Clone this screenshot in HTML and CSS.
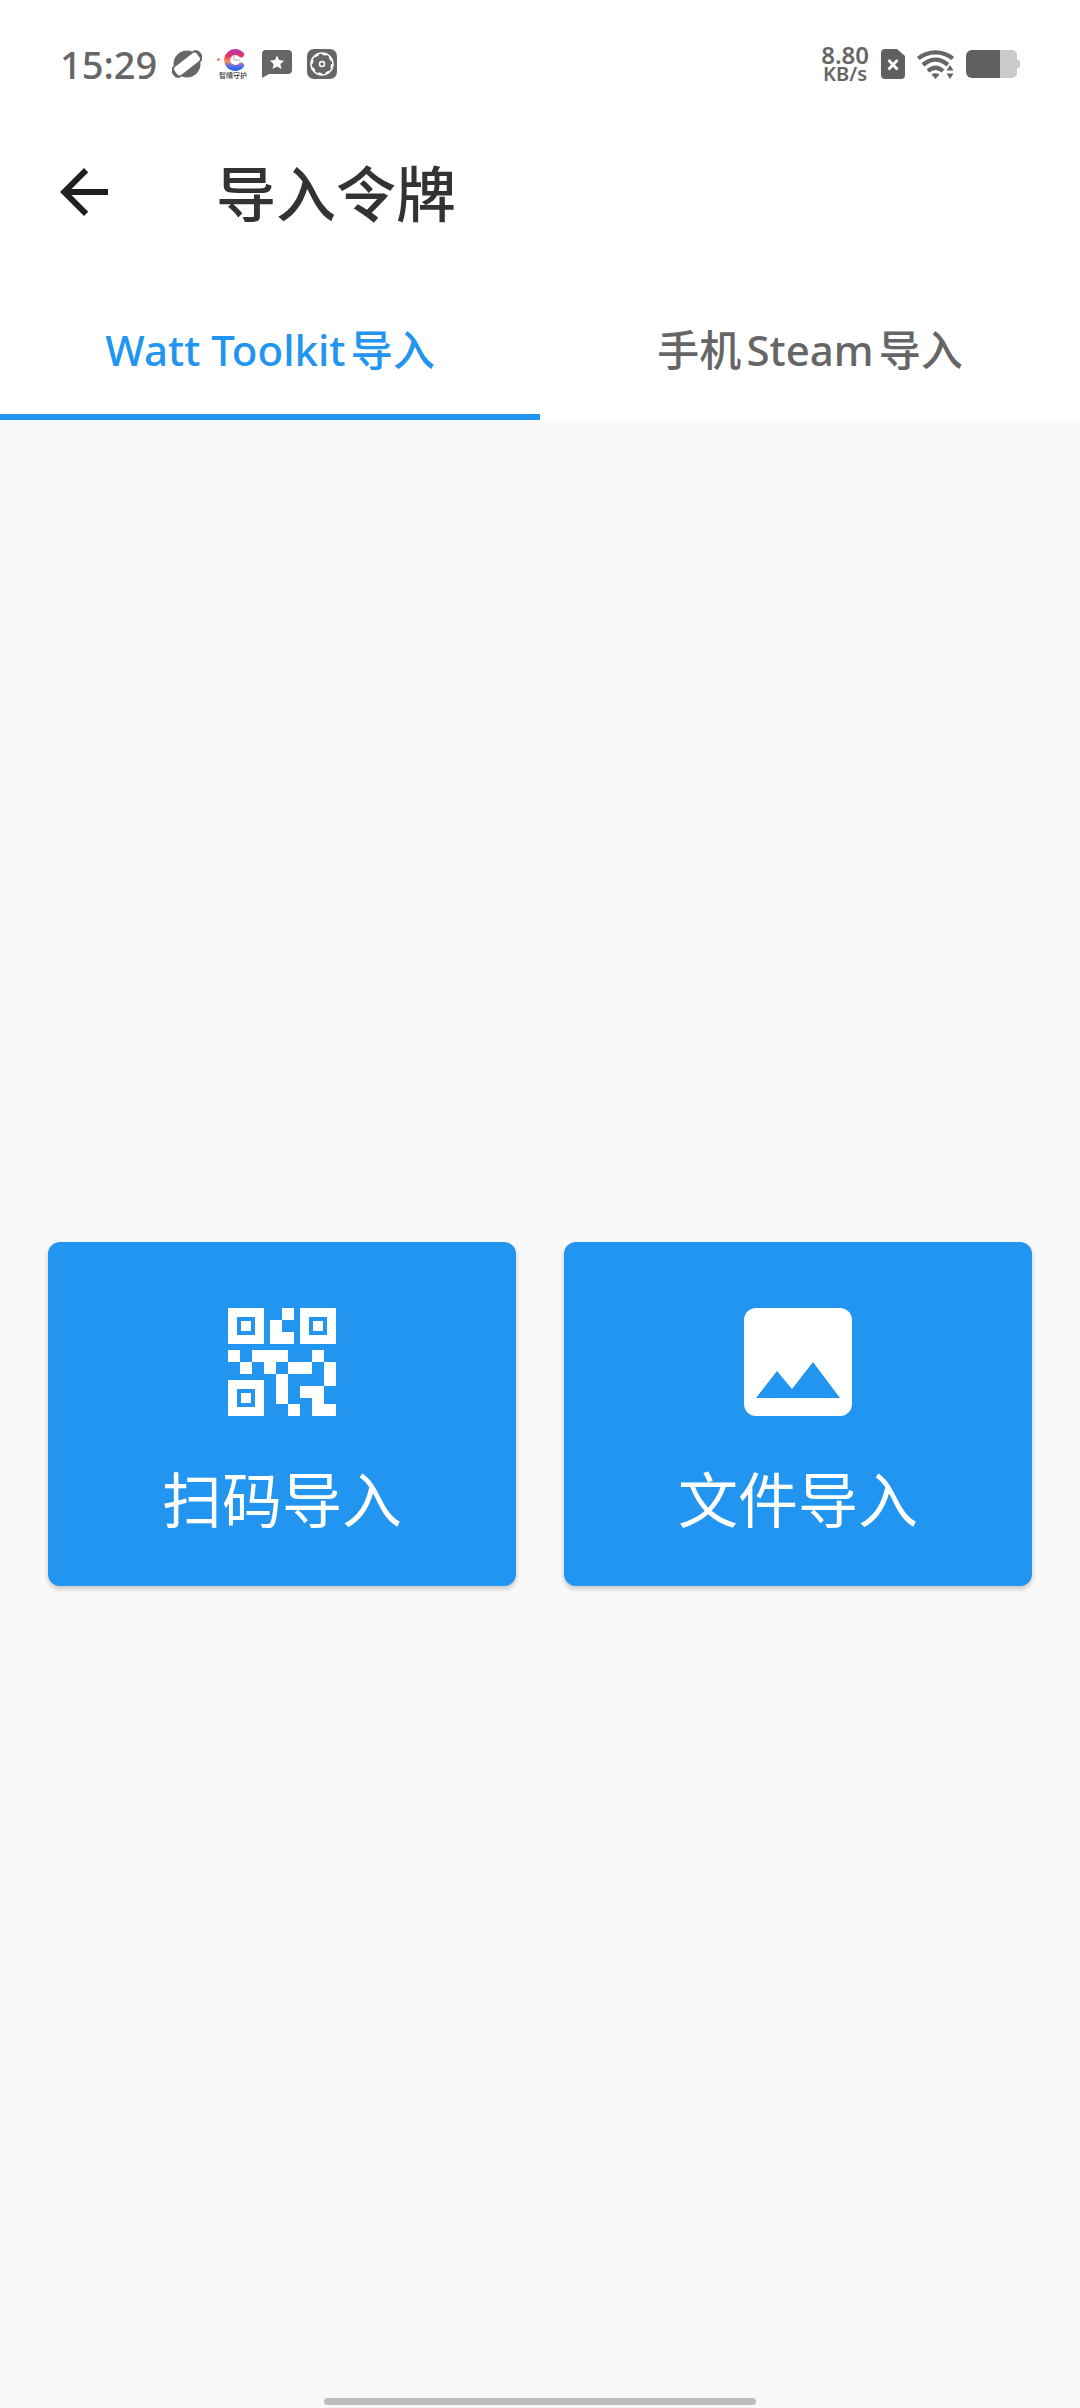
FILE: index.html
```html
<!DOCTYPE html>
<html lang="zh-CN">
<head>
<meta charset="utf-8">
<meta name="viewport" content="width=device-width, initial-scale=1">
<title>导入令牌</title>
<link rel="stylesheet" href="styles.css">
</head>
<body>
<div class="screen">
  <div class="status-bar">
    <div class="status-group">
      <span class="clock">15:29</span>
      <svg class="status-icon" viewBox="0 0 30 30" aria-hidden="true">
        <circle cx="15" cy="15" r="13.500" fill="#666"/>
        <g transform="rotate(-38 15 15)">
          <rect x="-2.500" y="8.500" width="35" height="13" rx="5" fill="#666"/>
          <rect x="1" y="10" width="28" height="10" rx="3" fill="#fff"/>
        </g>
      </svg>
      <svg class="status-icon" viewBox="0 0 30 30" aria-hidden="true">
        <defs>
          <linearGradient id="ring" x1="0" y1="0" x2="0" y2="1">
            <stop offset="0" stop-color="#c2359a"/>
            <stop offset=".25" stop-color="#e8385e"/>
            <stop offset=".6" stop-color="#f3905f"/>
            <stop offset=".8" stop-color="#8a6fd0"/>
            <stop offset="1" stop-color="#2d6bf0"/>
          </linearGradient>
        </defs>
        <path d="M24 5.500A8 8 0 1 0 24 16.500" fill="none" stroke="url(#ring)" stroke-width="6" stroke-linecap="round"/>
        <path d="M17 6v5h6" fill="none" stroke="#9db9b9" stroke-width="1"/>
        <circle cx="1.500" cy="10.500" r="1.500" fill="#ee7f6a"/>
        <text class="badge-text" x="16" y="29" text-anchor="middle">智晴守护</text>
      </svg>
      <svg class="status-icon" viewBox="0 0 30 30" aria-hidden="true">
        <path d="M4 1h22a4 4 0 0 1 4 4v16a4 4 0 0 1-4 4H7l-7 4V5a4 4 0 0 1 4-4z" fill="#666"/>
        <path d="M15 6.500l2.100 4.600 5 .6-3.700 3.400 1 5L15 17.600l-4.400 2.500 1-5-3.700-3.400 5-.6z" fill="#fff"/>
      </svg>
      <svg class="status-icon" viewBox="0 0 30 30" aria-hidden="true">
        <rect width="30" height="30" rx="7" fill="#666"/>
        <circle cx="15" cy="15" r="11" fill="none" stroke="#fff" stroke-width="1.500"/>
        <circle cx="15" cy="15" r="10" fill="none" stroke="#fff" stroke-width="2" stroke-dasharray="4 3.854"/>
        <circle cx="15" cy="15" r="2.500" fill="none" stroke="#fff" stroke-width="1.600"/>
      </svg>
    </div>
    <div class="status-group status-group-end">
      <span class="speed"><span class="speed-value">8.80</span><span>KB/s</span></span>
      <svg class="sim-icon" viewBox="0 0 24 30" aria-hidden="true">
        <path d="M4 0h12l8 7v19a4 4 0 0 1-4 4H4a4 4 0 0 1-4-4V4a4 4 0 0 1 4-4z" fill="#606060"/>
        <path d="M7.500 11l9 9.500M16.500 11l-9 9.500" stroke="#fff" stroke-width="2.800"/>
      </svg>
      <svg class="wifi-icon" viewBox="0 0 37 30" aria-hidden="true">
        <g fill="none" stroke="#666" stroke-width="4.200">
          <path d="M1.200 9.500C11 1.200 26 1.200 35.800 9.500"/>
          <path d="M6 15.800C14 9 23 9 31 15.800"/>
          <path d="M11 22C16 17.600 21 17.600 26 22"/>
        </g>
        <path d="M14.500 25.500q4-2.600 8 0L18.500 30z" fill="#666"/>
        <path d="M33 13l5.500 9.500L33 32l-5.500-9.500z" fill="#fff"/>
        <path d="M33 16l3.500 5.500h-7zM33 30l3.500-5.500h-7z" fill="#666"/>
      </svg>
      <svg class="battery-icon" viewBox="0 0 54 28" aria-hidden="true">
        <path d="M34 0h12a5 5 0 0 1 5 5v4l3 2v6l-3 2v4a5 5 0 0 1-5 5H34z" fill="#cacaca"/>
        <path d="M34 0H6a6 6 0 0 0-6 6v16a6 6 0 0 0 6 6h28z" fill="#606060"/>
      </svg>
    </div>
  </div>

  <header class="toolbar">
    <button class="back" type="button" aria-label="返回">
      <svg class="back-icon" viewBox="0 0 24 24" aria-hidden="true">
        <path d="M20 11H7.830l5.590-5.590L12 4l-8 8 8 8 1.410-1.410L7.830 13H20v-2z" fill="#1f1f1f"/>
      </svg>
    </button>
    <h1 class="title">导入令牌</h1>
  </header>

  <nav class="tabs" role="tablist">
    <button class="tab tab-active" type="button" role="tab" aria-selected="true">Watt Toolkit导入</button>
    <button class="tab" type="button" role="tab" aria-selected="false">手机Steam导入</button>
  </nav>

  <main class="content">
    <button class="card" type="button">
      <svg class="card-icon" viewBox="0 0 108 108" shape-rendering="crispEdges" fill="currentColor" aria-hidden="true">
        <path fill-rule="evenodd" d="M0 0h36v36H0zM9 9v18h18V9zM13 13h10v10H13z"/>
        <path fill-rule="evenodd" d="M72 0h36v36H72zM81 9v18h18V9zM85 13h10v10H85z"/>
        <path fill-rule="evenodd" d="M0 72h36v36H0zM9 81v18h18V81zM13 85h10v10H13z"/>
        <path d="M54 0h12v12H54zM42 12h12v12h12v12H42z"/>
        <path d="M0 42h12v12H0zM12 54h12v12H12zM24 42h36v12H48v12H36V54H24z"/>
        <path d="M84 42h12v12H84zM60 54h24v12H60zM96 54h12v24H96zM48 66h12v30H48zM60 96h12v12H60z"/>
        <path d="M72 78h24v18h12v12H84V90H72z"/>
      </svg>
      <span class="card-label">扫码导入</span>
    </button>
    <button class="card" type="button">
      <svg class="card-icon" viewBox="0 0 108 108" fill="currentColor" aria-hidden="true">
        <path fill-rule="evenodd" d="M12 0h84a12 12 0 0 1 12 12v84a12 12 0 0 1-12 12H12a12 12 0 0 1-12-12V12A12 12 0 0 1 12 0zM33 63L12 90h84L69 54 48 81z"/>
      </svg>
      <span class="card-label">文件导入</span>
    </button>
  </main>
  <div class="home-pill"></div>
</div>
</body>
</html>
```

FILE: styles.css
```css
* {
  box-sizing: border-box;
}

body {
  margin: 0;
  background: #f9f9f9;
  font-family: "Noto Sans", "Noto Sans CJK SC", sans-serif;
  color: #333;
}

button {
  margin: 0;
  padding: 0;
  border: 0;
  background: none;
  font: inherit;
  color: inherit;
  cursor: pointer;
}

svg {
  display: block;
  flex: none;
}

.screen {
  position: relative;
  display: flex;
  flex-direction: column;
  min-height: 100vh;
}

.status-bar {
  display: flex;
  justify-content: space-between;
  align-items: center;
  height: 108px;
  padding: 20px 60px 0;
  background: #fff;
  color: #666;
}

.status-group {
  display: flex;
  align-items: center;
  gap: 15px;
}

.status-group-end {
  gap: 12px;
}

.clock {
  font-size: 38px;
  font-weight: 500;
  line-height: 40px;
}

.status-icon {
  width: 30px;
  height: 30px;
}

.badge-text {
  font-family: "Noto Sans CJK SC", sans-serif;
  font-size: 7px;
  font-weight: 500;
  fill: #333;
}

.speed {
  display: flex;
  flex-direction: column;
  align-items: center;
  font-size: 20px;
  font-weight: 600;
  line-height: 19px;
}

.speed-value {
  font-size: 24px;
}

.sim-icon {
  width: 24px;
  height: 30px;
}

.wifi-icon {
  width: 37px;
  height: 30px;
}

.battery-icon {
  width: 54px;
  height: 28px;
}

.toolbar {
  display: flex;
  align-items: center;
  gap: 96px;
  height: 168px;
  padding: 0 48px;
  background: #fff;
}

.back-icon {
  width: 72px;
  height: 72px;
}

.title {
  margin: 0;
  padding-bottom: 2px;
  font-family: "Noto Sans CJK SC", sans-serif;
  font-size: 60px;
  font-weight: 500;
  line-height: 84px;
}

.tabs {
  display: grid;
  grid-template-columns: 1fr 1fr;
  height: 144px;
  background: #fff;
}

.tab {
  padding-top: 4px;
  border-top: 6px solid transparent;
  border-bottom: 6px solid transparent;
  font-size: 42px;
  font-weight: 500;
  line-height: 60px;
  text-autospace: normal;
  color: #666;
}

.tab-active {
  border-bottom-color: #2295f1;
  color: #2295f1;
}

.content {
  flex: 1;
  display: grid;
  grid-template-columns: 1fr 1fr;
  align-content: center;
  gap: 48px;
  padding: 0 48px;
}

.card {
  display: flex;
  flex-direction: column;
  align-items: center;
  gap: 39px;
  padding: 66px 24px 47px;
  border-radius: 12px;
  background: #2295f1;
  color: #fff;
  box-shadow: 0 3px 5px rgba(0, 0, 0, 0.2);
}

.card-icon {
  width: 108px;
  height: 108px;
}

.card-label {
  font-family: "Noto Sans CJK SC", sans-serif;
  font-size: 60px;
  font-weight: 400;
  line-height: 84px;
}

.home-pill {
  position: absolute;
  bottom: 3px;
  left: 30%;
  width: 40%;
  height: 7px;
  border-radius: 4px;
  background: #bdbdbd;
}
```
